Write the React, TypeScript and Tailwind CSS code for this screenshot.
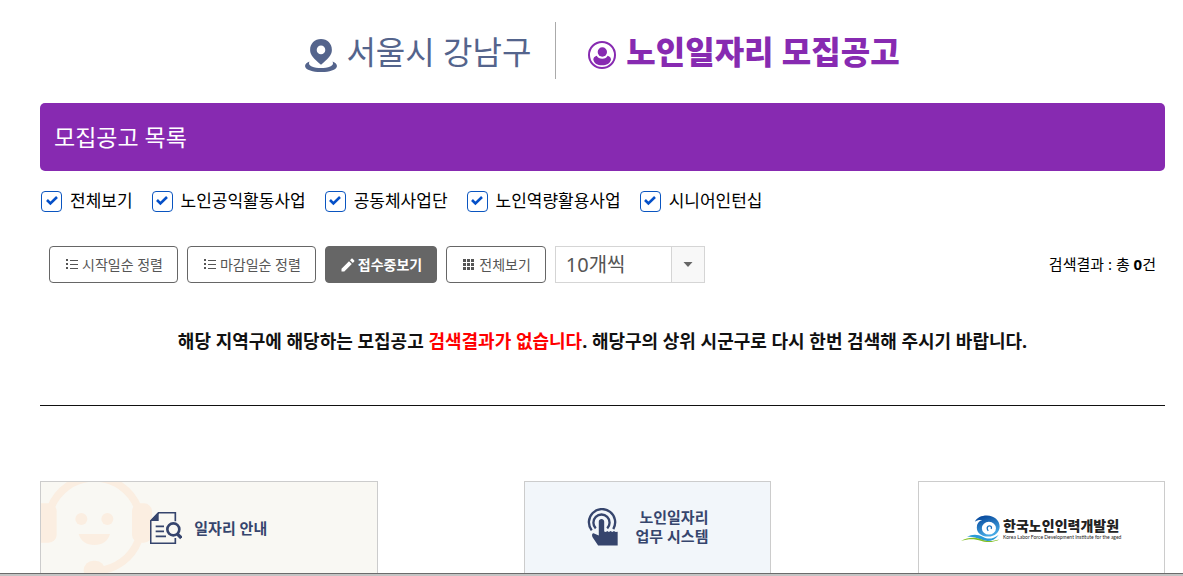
import type { ReactNode } from "react"

const categorias = [
  { id: "all", label: "전체보기" },
  { id: "public", label: "노인공익활동사업" },
  { id: "community", label: "공동체사업단" },
  { id: "capability", label: "노인역량활용사업" },
  { id: "intern", label: "시니어인턴십" },
]

export default function App() {
  return (
    <div className="flex h-screen flex-col bg-white font-['Noto_Sans','Noto_Sans_CJK_KR',sans-serif] text-black">
      <div className="min-h-0 flex-1 overflow-hidden pl-10 pr-[18px]">
        <PageHeader />
        <main>
          <h2 className="flex h-[68px] items-center rounded-[5px] bg-[#872ab1] px-[14px] text-[23px] font-normal text-white">
            모집공고 목록
          </h2>
          <CategoryFilter />
          <Toolbar />
          <p className="mt-11 border-b border-[#111] pb-[50px] text-center text-lg leading-7 font-bold text-[#111]">
            해당 지역구에 해당하는 모집공고 <span className="text-[#ff0000]">검색결과가 없습니다</span>. 해당구의 상위
            시군구로 다시 한번 검색해 주시기 바랍니다.
          </p>
        </main>
        <FooterLinks />
      </div>
      <div className="h-[3px] shrink-0 border-t border-[#6b6b6b] bg-[#c4c4c4]" />
    </div>
  )
}

function PageHeader() {
  return (
    <header className="flex justify-center pt-[22px] pb-6">
      <div className="flex h-[57px] items-center border-r border-[#aaa] pt-[2px] pr-6 text-[#54648c]">
        <PinIcon />
        <span className="ml-[9px] text-[32px] leading-none font-normal">서울시 강남구</span>
      </div>
      <h1 className="flex h-[57px] items-center pt-[2px] pl-8 text-[32px] leading-none font-black text-[#872ab1]">
        <UserIcon />
        <span className="ml-[10px]">노인일자리 모집공고</span>
      </h1>
    </header>
  )
}

function CategoryFilter() {
  return (
    <div className="mt-[18px] flex h-6 items-center gap-[19px] pl-px">
      {categorias.map((c) => (
        <label key={c.id} htmlFor={c.id} className="flex items-center gap-2 text-[17px] leading-6">
          <span className="grid size-[21px] place-items-center">
            <input
              id={c.id}
              type="checkbox"
              defaultChecked
              className="peer col-start-1 row-start-1 size-[21px] appearance-none rounded-[4px] border border-[#0a55c0] bg-white"
            />
            <svg
              viewBox="0 0 12 10"
              className="pointer-events-none invisible col-start-1 row-start-1 h-[10px] w-3 fill-none stroke-[#0550c8] stroke-[2.6] peer-checked:visible"
            >
              <path d="M1 4 4.4 7.5 11 1" />
            </svg>
          </span>
          {c.label}
        </label>
      ))}
    </div>
  )
}

function SortButton({ icon, active, children }: { icon: ReactNode; active?: boolean; children: ReactNode }) {
  return (
    <button
      type="button"
      className={`flex h-[37px] items-center gap-[3px] rounded-[4px] border border-[#666] pr-[14px] pl-[15px] text-sm ${
        active ? "bg-[#666] font-bold text-white" : "bg-white text-[#555]"
      }`}
    >
      {icon}
      {children}
    </button>
  )
}

function Toolbar() {
  return (
    <div className="mt-[33px] flex items-center justify-between px-[9px]">
      <div className="flex gap-[9px]">
        <SortButton icon={<ListIcon />}>시작일순 정렬</SortButton>
        <SortButton icon={<ListIcon />}>마감일순 정렬</SortButton>
        <SortButton icon={<PencilIcon />} active>
          접수중보기
        </SortButton>
        <SortButton icon={<GridIcon />}>전체보기</SortButton>
        <div className="grid h-[37px] w-[150px] grid-cols-[1fr_34px]">
          <select
            aria-label="페이지당 개수"
            className="col-span-2 col-start-1 row-start-1 appearance-none border border-[#d5d5d5] bg-white pl-[10px] text-xl leading-none font-normal text-[#555]"
          >
            <option>10개씩</option>
            <option>20개씩</option>
            <option>30개씩</option>
          </select>
          <span className="pointer-events-none col-start-2 row-start-1 grid place-items-center border border-[#d5d5d5] bg-[#f8f8f8]">
            <svg viewBox="0 0 10 5" className="h-[5px] w-[10px] fill-[#666]">
              <path d="M.5 0h9L5 5z" />
            </svg>
          </span>
        </div>
      </div>
      <p className="text-[15px]">
        검색결과 : 총 <b>0</b>건
      </p>
    </div>
  )
}

function FooterLinks() {
  return (
    <footer className="mt-[75px] flex justify-between text-[15px] leading-[19px] font-bold text-[#36456d]">
      <a
        href="#guide"
        className="relative flex h-[110px] w-[30%] justify-center overflow-hidden border border-[#ccc] bg-[#f9f8f3] pt-[30px]"
      >
        <HeadsetFace />
        <span className="relative flex h-8 items-center gap-3">
          <DocSearchIcon />
          일자리 안내
        </span>
      </a>
      <a
        href="#system"
        className="flex h-[110px] w-[22%] justify-center border border-[#ccc] bg-[#f2f6fa] pt-[26px]"
      >
        <span className="flex h-[38px] items-center gap-[18px] text-right">
          <TouchIcon />
          <span>
            노인일자리
            <br />
            업무 시스템
          </span>
        </span>
      </a>
      <a href="#kordi" className="flex h-[110px] w-[22%] justify-center border border-[#ccc] bg-white pt-8">
        <span className="flex h-[29px] items-center gap-[3px]">
          <KordiMark />
          <span className="flex flex-col pt-px text-[#222]">
            <span className="text-sm leading-4 font-black">한국노인인력개발원</span>
            <span className="font-[Lato,sans-serif] text-[5px] leading-[6px] font-normal whitespace-nowrap">
              Korea Labor Force Development Institute for the aged
            </span>
          </span>
        </span>
      </a>
    </footer>
  )
}

function PinIcon() {
  return (
    <svg viewBox="0 0 96 100" className="mt-2 h-[33px] w-8">
      <path
        fill="currentColor"
        fillRule="evenodd"
        d="M48 0c19 0 33 14 33 33 0 17-13 27-33 45C28 60 15 50 15 33 15 14 29 0 48 0Zm0 20a13 13 0 1 0 0 26 13 13 0 0 0 0-26Z"
      />
      <path
        fill="currentColor"
        d="M13 68C-4 74-4 87 9 93c22 10 57 10 78 0 13-6 13-19-4-25 3 7 1 11-7 15-16 7-40 7-56 0-8-4-10-8-7-15Z"
      />
    </svg>
  )
}

function UserIcon() {
  return (
    <svg viewBox="0 0 84 84" className="mt-1.5 size-7">
      <circle cx="42" cy="42" r="39" fill="none" stroke="currentColor" strokeWidth="6" />
      <circle cx="43" cy="33" r="14" fill="currentColor" />
      <path fill="currentColor" d="M26 44c-7 2-10 6-10 12 3 11 12 17 26 17s24-6 27-17c0-6-3-10-10-12-3 6-8 9-16 9s-14-3-17-9Z" />
    </svg>
  )
}

function ListIcon() {
  return (
    <svg viewBox="0 0 14 14" className="size-[14px] fill-current">
      <path d="M1 1h2v2H1zM1 5h2v2H1zM1 9h2v2H1zM5 2h8v1H5zM5 6h8v1H5zM5 10h8v1H5z" />
    </svg>
  )
}

function PencilIcon() {
  return (
    <svg viewBox="0 0 14 14" className="size-[14px] fill-current">
      <path d="M.5 10.7v2.8h2.8l7.5-7.5L8 3.2zM13.2 3.6c.4-.4.4-.9 0-1.2L11.6.8c-.3-.4-.8-.4-1.2 0L9 2.2 11.8 5z" />
    </svg>
  )
}

function GridIcon() {
  return (
    <svg viewBox="0 0 14 14" className="size-[14px] fill-current">
      <path d="M1 1h3v3H1zM5 1h3v3H5zM9 1h3v3H9zM1 5h3v3H1zM5 5h3v3H5zM9 5h3v3H9zM1 9h3v3H1zM5 9h3v3H5zM9 9h3v3H9z" />
    </svg>
  )
}

// Fondo decorativo de la primera tarjeta
function HeadsetFace() {
  return (
    <svg viewBox="33 36 339 276" className="absolute top-0 left-0 h-[92px] w-[113px] fill-[#fbeee1]">
      <path
        d="M62 114A140 140 0 0 1 324 114M324 214A140 140 0 0 1 205 302"
        fill="none"
        stroke="#fbeee1"
        strokeWidth="23"
      />
      <rect x="10" y="100" width="70" height="118" rx="24" />
      <rect x="306" y="100" width="60" height="118" rx="24" />
      <circle cx="154" cy="147" r="18" />
      <circle cx="232" cy="147" r="18" />
      <path d="M146 192h94c-6 22-24 33-47 33s-41-11-47-33Z" />
      <rect x="161" y="272" width="64" height="58" rx="29" />
    </svg>
  )
}

function DocSearchIcon() {
  return (
    <svg viewBox="0 0 96 96" className="h-8 w-8 fill-none stroke-current">
      <path d="M76 28V2H26L2 27v67h74V78" strokeWidth="5" />
      <path d="M26 0v27H0z" fill="currentColor" stroke="none" />
      <path d="M17 43h25M17 58h25M17 73h31" strokeWidth="5" />
      <circle cx="70" cy="52" r="18" strokeWidth="8" />
      <path d="m81 65 13 13" strokeWidth="10" />
    </svg>
  )
}

function TouchIcon() {
  return (
    <svg viewBox="0 0 92 112" className="h-[38px] w-[31px]">
      <g fill="none" stroke="currentColor" strokeWidth="7">
        <path d="M14 66A39 39 0 1 1 78 62" />
        <path d="M26 60A24 24 0 1 1 60 60" />
      </g>
      <path
        fill="currentColor"
        d="M35 40c0-10 16-10 16 0v29l5 2 4-3 5 3 5-3 5 3 5-3 5 3 6-1v41H33L17 87c-4-6-2-13 4-12l14 6Z"
      />
    </svg>
  )
}

function KordiMark() {
  return (
    <svg viewBox="0 0 116 80" className="h-[27px] w-[39px]">
      <defs>
        <linearGradient id="ola" x1="0" y1="0" x2="0.4" y2="1">
          <stop offset="0" stopColor="#003c93" />
          <stop offset="1" stopColor="#44a8e4" />
        </linearGradient>
      </defs>
      <path
        fill="url(#ola)"
        fillRule="evenodd"
        d="M41 20C47 7 61 1 77 1c22 0 38 15 38 33 0 17-15 30-34 30-21 0-34-11-34-27 0-11 6-19 16-22-8-1-16 0-22 5Zm42 0a21 19 0 1 0 0 38 21 19 0 0 0 0-38Z"
      />
      <path fill="none" stroke="#1871bd" strokeWidth="4" d="M81 47c-6-7-3-15 4-15 6 0 7 6 4 9" />
      <path fill="#299bd8" d="M18 65c15-9 31-9 48 0 14 7 28 7 46-6-14 19-33 22-53 14-15-6-26-10-41-8Z" />
      <path fill="#82bf26" d="M0 77c19-10 40-13 62-4 18 7 34 5 52 0-15 8-34 10-53 4-21-7-39-7-61 0Z" />
    </svg>
  )
}
